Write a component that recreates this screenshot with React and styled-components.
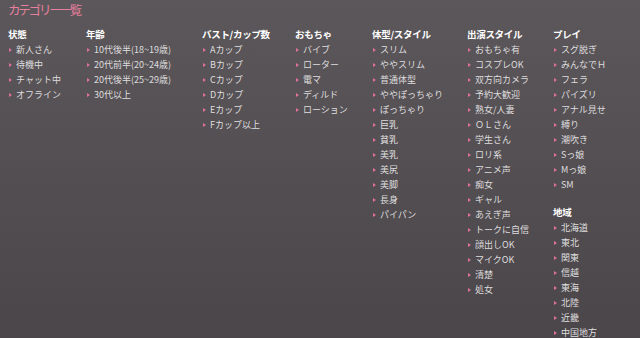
import React from "react";
import styled, { createGlobalStyle } from "styled-components";

const Global = createGlobalStyle`
  html, body { margin: 0; padding: 0; overflow: hidden; }
  body {
    background: linear-gradient(to bottom, #5b575a 0%, #4a4649 100%);
    height: 338px;
    font-family: "Noto Sans CJK JP", "Noto Sans", sans-serif;
  }
`;

const Page = styled.div`
  padding: 0 8px;
  height: 338px;
  box-sizing: border-box;
`;

const Title = styled.h1`
  margin: 0;
  height: 20px;
  line-height: 20px;
  font-size: 12.5px;
  font-weight: normal;
  letter-spacing: -2.2px;
  color: #e6809f;
`;

const Grid = styled.div`
  display: grid;
  grid-template-columns: 78px 116px 93px 77px 95px 86px 1fr;
  margin-top: 7px;
  align-items: start;
`;

const Column = styled.div`
  display: flex;
  flex-direction: column;
`;

const Group = styled.div`
  margin-top: ${(p) => (p.$first ? 0 : 13)}px;
`;

const Heading = styled.h2`
  margin: 0;
  font-size: 9.5px;
  line-height: 15px;
  font-weight: bold;
  color: #ffffff;
  letter-spacing: -0.3px;
`;

const List = styled.ul`
  list-style: none;
  margin: 0;
  padding: 0;
`;

const Item = styled.li`
  display: flex;
  align-items: center;
  height: 15px;
  font-size: 9px;
  color: #dfdddf;
  white-space: nowrap;
  &::before {
    content: "";
    display: block;
    width: 0;
    height: 0;
    margin-left: 1px;
    margin-right: 4px;
    border-top: 2px solid transparent;
    border-bottom: 2px solid transparent;
    border-left: 3px solid #de7199;
  }
`;

const data = [
  [{ h: "状態", items: ["新人さん", "待機中", "チャット中", "オフライン"] }],
  [{ h: "年齢", items: ["10代後半(18~19歳)", "20代前半(20~24歳)", "20代後半(25~29歳)", "30代以上"] }],
  [{ h: "バスト/カップ数", items: ["Aカップ", "Bカップ", "Cカップ", "Dカップ", "Eカップ", "Fカップ以上"] }],
  [{ h: "おもちゃ", items: ["バイブ", "ローター", "電マ", "ディルド", "ローション"] }],
  [{ h: "体型/スタイル", items: ["スリム", "ややスリム", "普通体型", "ややぽっちゃり", "ぽっちゃり", "巨乳", "貧乳", "美乳", "美尻", "美脚", "長身", "パイパン"] }],
  [{ h: "出演スタイル", items: ["おもちゃ有", "コスプレOK", "双方向カメラ", "予約大歓迎", "熟女/人妻", "ＯＬさん", "学生さん", "ロリ系", "アニメ声", "痴女", "ギャル", "あえぎ声", "トークに自信", "顔出しOK", "マイクOK", "清楚", "処女"] }],
  [
    { h: "プレイ", items: ["スグ脱ぎ", "みんなでＨ", "フェラ", "パイズリ", "アナル見せ", "縛り", "潮吹き", "Sっ娘", "Mっ娘", "SM"] },
    { h: "地域", items: ["北海道", "東北", "関東", "信越", "東海", "北陸", "近畿", "中国地方"] },
  ],
];

export default function App() {
  return (
    <>
      <Global />
      <Page>
        <Title>カテゴリー一覧</Title>
        <Grid>
          {data.map((col, ci) => (
            <Column key={ci}>
              {col.map((g, gi) => (
                <Group key={gi} $first={gi === 0}>
                  <Heading>{g.h}</Heading>
                  <List>
                    {g.items.map((it) => (
                      <Item key={it}>{it}</Item>
                    ))}
                  </List>
                </Group>
              ))}
            </Column>
          ))}
        </Grid>
      </Page>
    </>
  );
}
